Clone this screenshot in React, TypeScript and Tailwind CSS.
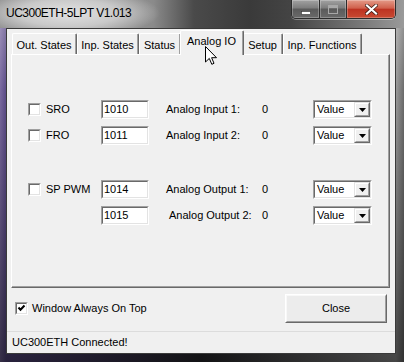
import React from "react";

function Sunken({ className = "", children }: { className?: string; children?: React.ReactNode }) {
  return (
    <div className={`border border-t-[#a0a0a0] border-l-[#a0a0a0] border-r-white border-b-white ${className}`}>
      <div className="h-full w-full border border-t-[#696969] border-l-[#696969] border-r-[#e3e3e3] border-b-[#e3e3e3] bg-white">
        {children}
      </div>
    </div>
  );
}

function Check({ checked = false }: { checked?: boolean }) {
  return (
    <Sunken className="w-[13px] h-[13px] shrink-0">
      {checked && (
        <svg width="9" height="9" viewBox="0 0 9 9" className="block">
          <path d="M1.5 3.5 L3.5 5.8 L7.5 1.5" stroke="#000" strokeWidth="2" fill="none" />
        </svg>
      )}
    </Sunken>
  );
}

function TextBox({ value }: { value: string }) {
  return (
    <Sunken className="w-[48px] h-[19px] shrink-0">
      <div className="pl-[1px] text-[11px] leading-[15px] text-black">{value}</div>
    </Sunken>
  );
}

function Combo() {
  return (
    <Sunken className="w-[59px] h-[19px] shrink-0">
      <div className="flex h-full">
        <span className="flex-1 pl-[2px] text-[11px] leading-[15px] text-black">Value</span>
        <div className="w-[16px] h-full border border-t-[#e3e3e3] border-l-[#e3e3e3] border-r-[#696969] border-b-[#696969]">
          <div className="h-full w-full border border-t-white border-l-white border-r-[#a0a0a0] border-b-[#a0a0a0] bg-[#f0f0f0] flex items-center justify-center">
            <svg width="7" height="4" viewBox="0 0 7 4" className="block">
              <path d="M0 0 H7 L3.5 4 Z" fill="#000" />
            </svg>
          </div>
        </div>
      </div>
    </Sunken>
  );
}

function Row({
  check,
  label,
  num,
  text,
  textClass = "",
  className = "",
}: {
  check?: boolean;
  label?: string;
  num: string;
  text: string;
  textClass?: string;
  className?: string;
}) {
  return (
    <div className={`flex items-center h-[19px] ${className}`}>
      <div className="w-[73px] flex items-center gap-[5px] shrink-0">
        {check && <Check />}
        {label && <span className="text-[11px] text-black whitespace-nowrap">{label}</span>}
      </div>
      <TextBox value={num} />
      <div className="w-[17px] shrink-0" />
      <span className={`w-[96px] shrink-0 text-[11px] text-black whitespace-nowrap ${textClass}`}>{text}</span>
      <span className="w-[51px] shrink-0 text-[11px] text-black">0</span>
      <Combo />
    </div>
  );
}

function Tab({ label, className, active = false }: { label: string; className: string; active?: boolean }) {
  if (active) {
    return (
      <div
        className={`relative z-10 h-[25px] -mb-[1px] -mx-[1px] rounded-t-[2px] border-t border-l border-r border-t-white border-l-white border-r-[#696969] bg-[#f0f0f0] ${className}`}
      >
        <div className="h-full border-r border-r-[#a0a0a0] flex items-start justify-center pt-[4px] text-[11px] leading-[13px] text-black whitespace-nowrap">
          {label}
        </div>
      </div>
    );
  }
  return (
    <div
      className={`h-[21px] rounded-t-[2px] border-t border-l border-r border-t-white border-l-white border-r-[#696969] bg-[#f0f0f0] ${className}`}
    >
      <div className="h-full border-r border-r-[#a0a0a0] flex items-start justify-center pt-[5px] text-[11px] leading-[13px] text-black whitespace-nowrap">
        {label}
      </div>
    </div>
  );
}

export default function App() {
  return (
    <div className="w-[404px] h-[362px] overflow-hidden relative font-['Liberation_Sans',Arial,sans-serif] bg-[linear-gradient(180deg,rgba(255,255,255,0.35)_0%,rgba(0,0,0,0)_25%,rgba(0,0,0,0.55)_100%),linear-gradient(90deg,#7a6aa0_0%,#5a4a86_1.5%,#2a2a2e_50%,#9a9a9a_98%,#6a6a6a_100%)]">
      {/* Title bar */}
      <div className="h-[28px] flex items-start bg-[radial-gradient(ellipse_92px_24px_at_68px_13px,rgba(226,226,226,1)_0%,rgba(206,206,206,0.9)_55%,rgba(180,180,180,0)_100%),linear-gradient(90deg,#8e8e8e_0%,#a6a6a6_20%,#8a8a8a_38%,#4a4a4a_48%,#3a3a3a_62%,#444444_72%,#7a7a7a_90%,#9a9a9a_100%)]">
        <span className="ml-[6px] mt-[6px] text-[12px] leading-[14px] tracking-[-0.5px] text-black whitespace-nowrap">
          UC300ETH-5LPT V1.013
        </span>
        <div className="ml-auto mr-[8px] flex h-[19px] rounded-b-[5px] overflow-hidden border border-t-0 border-[#2c2c2c] shadow-[0_1px_0_rgba(255,255,255,0.35)]">
          <div className="w-[28px] h-full flex items-center justify-center border-r border-[#2c2c2c] bg-[linear-gradient(180deg,#a2a2a2_0%,#7c7c7c_45%,#5a5a5a_50%,#6a6a6a_100%)] shadow-[inset_0_0_0_1px_rgba(255,255,255,0.25)]">
            <svg width="10" height="10" viewBox="0 0 10 10" className="block mt-[3px]">
              <rect x="0.5" y="5.5" width="9" height="3" fill="#fff" stroke="#333" strokeWidth="0.6" />
            </svg>
          </div>
          <div className="w-[27px] h-full flex items-center justify-center border-r border-[#2c2c2c] bg-[linear-gradient(180deg,#a2a2a2_0%,#7c7c7c_45%,#5a5a5a_50%,#6a6a6a_100%)] shadow-[inset_0_0_0_1px_rgba(255,255,255,0.25)]">
            <svg width="10" height="9" viewBox="0 0 10 9" className="block">
              <rect x="0.5" y="0.5" width="9" height="8" fill="none" stroke="#a8a8a8" strokeWidth="1" />
              <rect x="1" y="1" width="8" height="2" fill="#a8a8a8" />
            </svg>
          </div>
          <div className="w-[48px] h-full flex items-center justify-center bg-[linear-gradient(180deg,#e49a88_0%,#d0604c_45%,#bd3322_52%,#c84a32_100%)] shadow-[inset_0_0_0_1px_rgba(255,255,255,0.25)]">
            <svg width="13" height="11" viewBox="0 0 13 11" className="block">
              <path d="M2 1.5 L11 9.5 M11 1.5 L2 9.5" stroke="#3a1a14" strokeWidth="3.6" strokeLinecap="square" />
              <path d="M2 1.5 L11 9.5 M11 1.5 L2 9.5" stroke="#fff" strokeWidth="2.2" strokeLinecap="square" />
            </svg>
          </div>
        </div>
      </div>

      {/* Client area */}
      <div className="ml-[6px] w-[390px] h-[326px] border border-[#3a3a3a] bg-[#f0f0f0] flex flex-col">
        {/* Tab strip */}
        <div className="mt-[1px] h-[24px] flex items-end pl-[5px]">
          <Tab label="Out. States" className="w-[65px]" />
          <Tab label="Inp. States" className="w-[62px]" />
          <Tab label="Status" className="w-[42px]" />
          <Tab label="Analog IO" className="w-[64px]" active />
          <Tab label="Setup" className="w-[40px]" />
          <Tab label="Inp. Functions" className="w-[79px]" />
        </div>
        {/* Tab panel */}
        <div className="ml-[4px] w-[379px] h-[234px] border border-t-white border-l-white border-r-[#696969] border-b-[#696969] bg-[#f0f0f0]">
          <div className="h-full border-r border-b border-r-[#a0a0a0] border-b-[#a0a0a0] pl-[16px] pt-[45px]">
            <Row check label="SRO" num="1010" text="Analog Input 1:" />
            <Row check label="FRO" num="1011" text="Analog Input 2:" className="mt-[7px]" />
            <Row check label="SP PWM" num="1014" text="Analog Output 1:" className="mt-[35px]" />
            <Row num="1015" text="Analog Output 2:" textClass="pl-[3px]" className="mt-[7px]" />
          </div>
        </div>
        {/* Bottom row */}
        <div className="pt-[6px] flex items-center justify-between pl-[8px] pr-[8px]">
          <div className="flex items-center gap-[4px]">
            <Check checked />
            <span className="text-[11px] text-black whitespace-nowrap">Window Always On Top</span>
          </div>
          <div className="w-[102px] h-[29px] border border-t-white border-l-white border-r-[#696969] border-b-[#696969]">
            <div className="h-full w-full border border-t-[#f8f8f8] border-l-[#f8f8f8] border-r-[#a0a0a0] border-b-[#a0a0a0] bg-[#ececec] flex items-center justify-center text-[11px] text-black">
              Close
            </div>
          </div>
        </div>
        {/* Status strip */}
        <div className="mt-[8px] h-[22px] border-t border-t-[#dcdcdc] flex items-center pl-[5px] text-[11px] text-black whitespace-nowrap">
          UC300ETH Connected!
        </div>
      </div>

      {/* Mouse cursor */}
      <svg width="13" height="20" viewBox="0 0 13 20" className="absolute left-[205px] top-[46px] z-20 block">
        <path d="M0.5 0.5 V16 L4.3 12.4 L6.8 18.3 L9 17.3 L6.6 11.7 H11.5 Z" fill="#fff" stroke="#000" strokeWidth="1" strokeLinejoin="miter" />
      </svg>
    </div>
  );
}
